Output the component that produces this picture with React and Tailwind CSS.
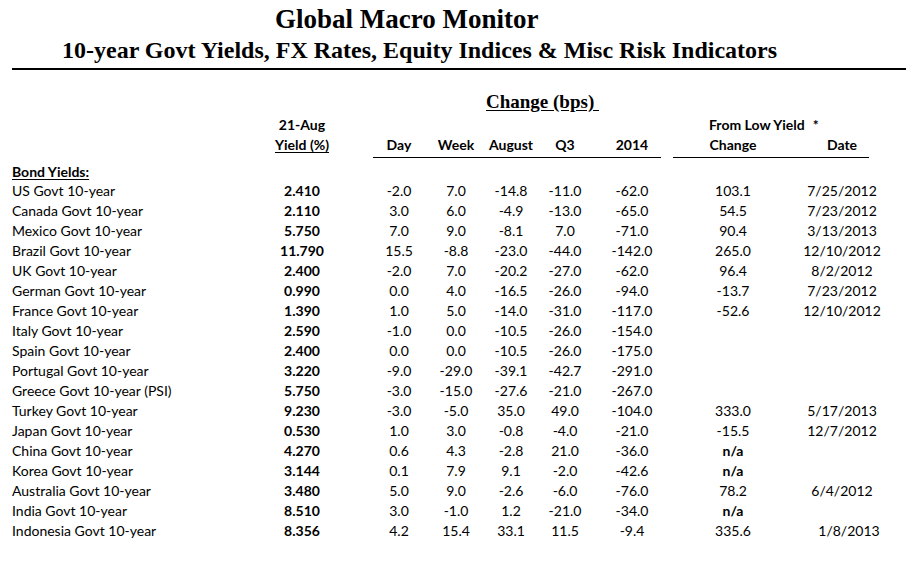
const rows = [
  ["US Govt 10-year", "2.410", "-2.0", "7.0", "-14.8", "-11.0", "-62.0", "103.1", "7/25/2012"],
  ["Canada Govt 10-year", "2.110", "3.0", "6.0", "-4.9", "-13.0", "-65.0", "54.5", "7/23/2012"],
  ["Mexico Govt 10-year", "5.750", "7.0", "9.0", "-8.1", "7.0", "-71.0", "90.4", "3/13/2013"],
  ["Brazil Govt 10-year", "11.790", "15.5", "-8.8", "-23.0", "-44.0", "-142.0", "265.0", "12/10/2012"],
  ["UK Govt 10-year", "2.400", "-2.0", "7.0", "-20.2", "-27.0", "-62.0", "96.4", "8/2/2012"],
  ["German Govt 10-year", "0.990", "0.0", "4.0", "-16.5", "-26.0", "-94.0", "-13.7", "7/23/2012"],
  ["France Govt 10-year", "1.390", "1.0", "5.0", "-14.0", "-31.0", "-117.0", "-52.6", "12/10/2012"],
  ["Italy Govt 10-year", "2.590", "-1.0", "0.0", "-10.5", "-26.0", "-154.0", "", ""],
  ["Spain Govt 10-year", "2.400", "0.0", "0.0", "-10.5", "-26.0", "-175.0", "", ""],
  ["Portugal Govt 10-year", "3.220", "-9.0", "-29.0", "-39.1", "-42.7", "-291.0", "", ""],
  ["Greece Govt 10-year (PSI)", "5.750", "-3.0", "-15.0", "-27.6", "-21.0", "-267.0", "", ""],
  ["Turkey Govt 10-year", "9.230", "-3.0", "-5.0", "35.0", "49.0", "-104.0", "333.0", "5/17/2013"],
  ["Japan Govt 10-year", "0.530", "1.0", "3.0", "-0.8", "-4.0", "-21.0", "-15.5", "12/7/2012"],
  ["China Govt 10-year", "4.270", "0.6", "4.3", "-2.8", "21.0", "-36.0", "n/a", ""],
  ["Korea Govt 10-year", "3.144", "0.1", "7.9", "9.1", "-2.0", "-42.6", "n/a", ""],
  ["Australia Govt 10-year", "3.480", "5.0", "9.0", "-2.6", "-6.0", "-76.0", "78.2", "6/4/2012"],
  ["India Govt 10-year", "8.510", "3.0", "-1.0", "1.2", "-21.0", "-34.0", "n/a", ""],
  ["Indonesia Govt 10-year", "8.356", "4.2", "15.4", "33.1", "11.5", "-9.4", "335.6", "1/8/2013"],
]

const grid = "grid grid-cols-[250px_80px_31px_52px_62px_48px_60px_66px_12px_120px_98px] pl-[12px]"

const DataRow = ({ r }) => (
  <div className={`${grid} h-[20px] items-center leading-[20px]`}>
    <div>{r[0]}</div>
    <div className="text-center font-bold">{r[1]}</div>
    <div></div>
    <div className="text-center">{r[2]}</div>
    <div className="text-center">{r[3]}</div>
    <div className="text-center">{r[4]}</div>
    <div className="text-center">{r[5]}</div>
    <div className="text-center pl-[8px]">{r[6]}</div>
    <div></div>
    <div className={`text-center ${r[7] === "n/a" ? "font-bold" : ""}`}>{r[7]}</div>
    <div className={`text-center ${r[8] === "1/8/2013" ? "pl-[14px]" : ""}`}>{r[8]}</div>
  </div>
)

export default function App() {
  return (
    <div className="w-[906px] h-[561px] bg-white overflow-hidden text-black font-['Lato',sans-serif] text-[14px]">
      <div className="h-[38px] flex items-center pl-[275px] font-['Liberation_Serif',serif] font-bold text-[27px]">
        Global Macro Monitor
      </div>
      <div className="h-[24px] flex items-center pl-[62px] font-['Liberation_Serif',serif] font-bold text-[24px]">
        10-year Govt Yields, FX Rates, Equity Indices &amp; Misc Risk Indicators
      </div>
      <div className="mt-[6px] ml-[12px] h-[2px] bg-black"></div>

      <div className="mt-[22px] h-[20px] flex items-center pl-[486px] font-['Liberation_Serif',serif] font-bold text-[19px] underline underline-offset-2">
        Change (bps)&nbsp;
      </div>

      <div className={`${grid} mt-[2px] h-[20px] items-center font-bold`}>
        <div></div>
        <div className="text-center">21-Aug</div>
        <div className="col-span-7"></div>
        <div className="col-span-2 pl-[36px]">
          From Low Yield<span className="ml-[8px]">*</span>
        </div>
      </div>
      <div className={`${grid} h-[20px] items-center font-bold`}>
        <div></div>
        <div className="text-center underline underline-offset-2">Yield (%)</div>
        <div></div>
        <div className="text-center">Day</div>
        <div className="text-center">Week</div>
        <div className="text-center">August</div>
        <div className="text-center">Q3</div>
        <div className="text-center pl-[8px]">2014</div>
        <div></div>
        <div className="text-center">Change</div>
        <div className="text-center">Date</div>
      </div>
      <div className={`${grid} mt-[3px] h-[1px]`}>
        <div className="col-span-3"></div>
        <div className="col-span-5 bg-black"></div>
        <div></div>
        <div className="col-span-2">
          <div className="w-[196px] h-[1px] bg-black"></div>
        </div>
      </div>

      <div className="mt-[3px] h-[20px] pl-[12px] flex items-center font-bold underline underline-offset-2">
        Bond Yields:
      </div>
      {rows.map((r) => (
        <DataRow key={r[0]} r={r} />
      ))}
    </div>
  )
}
